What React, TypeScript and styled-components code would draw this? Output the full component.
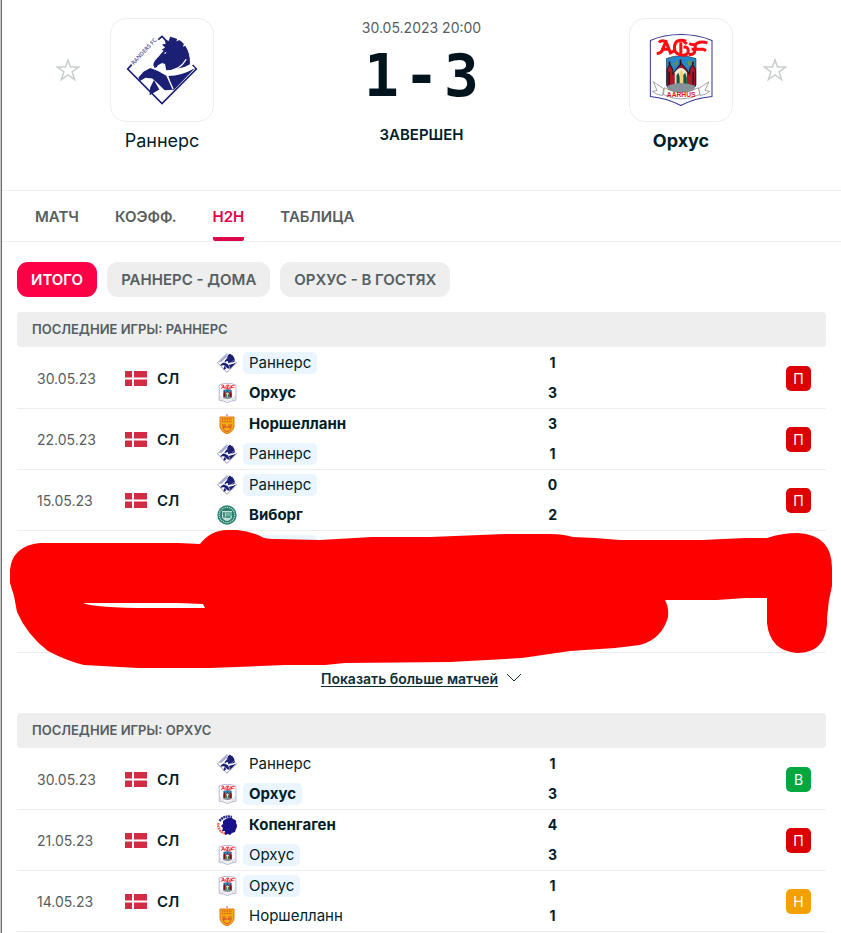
import React from "react";
import styled, { createGlobalStyle, css } from "styled-components";

const GlobalStyle = createGlobalStyle`
  * { box-sizing: border-box; }
  body {
    margin: 0;
    padding-left: 1px;
    background: #c8c8c8;
    color: #001e28;
    font-family: Inter, "Noto Sans", sans-serif;
    font-size: 14px;
  }
  button { font: inherit; border: 0; padding: 0; background: none; cursor: pointer; }
`;

const Page = styled.main`
  min-height: 100vh;
  background: #fff;
  border-left: 1px solid #6a6a6a;
`;

const Header = styled.header`
  display: grid;
  grid-template-columns: 24px 164px 1fr 164px 24px;
  padding: 18px 54px 34px;
  border-bottom: 1px solid #eee;
`;

const StarButton = styled.button`
  height: 24px;
  margin-top: 40px;
  color: #c8cdcd;
`;

const Team = styled.div`
  display: flex;
  flex-direction: column;
  align-items: center;
  gap: 4px;
`;

const LogoBox = styled.div`
  display: flex;
  align-items: center;
  justify-content: center;
  width: 104px;
  height: 104px;
  border: 1px solid #eee;
  border-radius: 16px;
`;

const TeamTitle = styled.a<{ $bold?: boolean }>`
  font-size: 18px;
  line-height: 30px;
  font-weight: ${(p) => (p.$bold ? 700 : 400)};
  color: #001e28;
  text-decoration: none;
`;

const Summary = styled.div`
  display: flex;
  flex-direction: column;
  align-items: center;
`;

const StartTime = styled.time`
  line-height: 20px;
  color: #555e61;
`;

const Score = styled.div`
  display: flex;
  gap: 5px;
  margin: 4px 0 12px;
  font: 700 58px/68px "DejaVu Sans Mono", monospace;
  color: #00141e;
`;

const Status = styled.div`
  font-size: 15px;
  line-height: 26px;
  font-weight: 600;
`;

const Tabs = styled.nav`
  display: flex;
  gap: 36px;
  height: 51px;
  padding: 0 33px;
  border-bottom: 1px solid #eee;
`;

const Tab = styled.a<{ $active?: boolean }>`
  display: flex;
  align-items: center;
  border-top: 4px solid transparent;
  border-bottom: 4px solid ${(p) => (p.$active ? "#dc0a4b" : "transparent")};
  border-radius: 2px;
  color: ${(p) => (p.$active ? "#e6004b" : "#555e61")};
  font-size: 15px;
  font-weight: 600;
  text-decoration: none;
`;

const Content = styled.div`
  padding: 20px 15px 0;
`;

const Chips = styled.div`
  display: flex;
  gap: 10px;
  margin-bottom: 15px;
`;

const Chip = styled.button<{ $active?: boolean }>`
  && { padding: 0 14px; font-size: 15px; font-weight: 600; }
  height: 35px;
  border-radius: 11px;
  color: ${(p) => (p.$active ? "#fff" : "#555e61")};
  background: ${(p) => (p.$active ? "#ff0046" : "#eee")};
`;

const Section = styled.section``;

const SectionTitle = styled.h2`
  margin: 0 0 1px;
  padding: 0 15px;
  font-size: 13px;
  line-height: 35px;
  font-weight: 600;
  color: #555e61;
  background: #eee;
  border-radius: 4px;
`;

const TableArea = styled.div`
  position: relative;
`;

const Matches = styled.table`
  width: 100%;
  table-layout: fixed;
  border-spacing: 0;
`;

const Cell = styled.td<{ $dim?: boolean }>`
  height: 61px;
  padding: 0;
  border-bottom: 1px solid #eee;
  ${(p) => p.$dim && css`padding-left: 20px; color: #555e61;`}
`;

const League = styled.div`
  display: flex;
  align-items: center;
  gap: 10px;
  font-size: 15px;
  font-weight: 600;
`;

const TeamLine = styled.div`
  display: flex;
  align-items: center;
  gap: 6px;
  height: 30px;
`;

const Emblem = styled.span`
  display: flex;
  justify-content: center;
  width: 20px;
`;

const TeamName = styled.span<{ $bold?: boolean; $marked?: boolean }>`
  height: 22px;
  padding: 0 6px;
  font-size: 15px;
  line-height: 22px;
  border-radius: 5px;
  font-weight: ${(p) => (p.$bold ? 700 : 400)};
  ${(p) => p.$marked && css`background: #ebf5ff;`}
`;

const BlankName = styled.div`
  width: 74px;
  height: 22px;
  margin: -26px 0 0 26px;
  border-radius: 5px;
  background: #ebf5ff;
`;

const Goals = styled.div`
  width: 24px;
  line-height: 30px;
  text-align: center;
  font-weight: 700;
`;

const resultColors: Record<string, string> = { "П": "#dc0000", "В": "#00a83f", "Н": "#f3a000" };

const Result = styled.button<{ $kind: string }>`
  display: block;
  width: 25px;
  height: 25px;
  && { margin: 0 15px 0 auto; line-height: 25px; }
  border-radius: 5px;
  color: #fff;
  background: ${(p) => resultColors[p.$kind]};
`;

const MoreLink = styled.a`
  display: flex;
  align-items: center;
  justify-content: center;
  gap: 8px;
  height: 50px;
  margin-bottom: 10px;
  font-size: 14px;
  font-weight: 600;
  color: #0f2d37;
  text-underline-offset: 2px;
`;

const MarkerStroke = styled.svg`
  position: absolute;
  left: -7px;
  bottom: -16px;
  width: calc(100% + 14px);
  height: 139px;
  pointer-events: none;
`;

function Star() {
  return (
    <svg width="24" height="24" viewBox="0 0 24 24" fill="none" stroke="currentColor" strokeWidth="1.5">
      <path d="M12 2l2.5 7.1h8.1l-6.5 4.8 2.5 7.7-6.6-4.7-6.6 4.7 2.5-7.7-6.5-4.8h8.1z" />
    </svg>
  );
}

function Randers({ size = 20 }: { size?: number }) {
  return (
    <svg width={size} height={size} viewBox="20 32 214 210" overflow="visible">
      <path d="M116 47L127 37L138 48M37 121L25 134L127 237L229 134L218 122" fill="none" stroke="#1c2074" strokeWidth="5" />
      {size < 30 && <path d="M30 124L116 42L130 68L66 127z" fill="#a9abd2" />}
      <g fill="#1c2074">
        <path d="M134 45l13 6 4-13q12 2 21 7l-2 7 8-4q8 5 14 12l-3 8 7-3q16 24 14 55l-16 8-54 12-4-21-9-3-12 7-4 6-6 2-4-9q2-13 17-26l14-17-6-2 10-7-9-9 11-2z" />
        <path d="M146 155q40-1 72-20l5-2-60 63-4 1z" />
        <path d="M57 159l15-17 20-11 23 9 25 14 11 17 10 25-26 1-22-21-15-14-20-2-17 10z" />
        <path d="M103 167l16 28-29 17 2-23z" />
      </g>
      <path d="M199 105q-19 34-60 35" fill="none" stroke="#fff" strokeWidth="4" />
      <path d="M140 147q45 5 74-24l10 7q-32 20-80 22z" fill="#fff" />
      <path d="M142 154l18 40" fill="none" stroke="#fff" strokeWidth="4" />
      <path d="M132 87l8-4-2 6z" fill="#fff" />
      {size > 30 && (
        <text transform="translate(43 123) rotate(-47)" fontFamily="Open Sans, sans-serif" fontSize="17" fontWeight="600" fill="#4a4d91">
          RANDERS FC
        </text>
      )}
    </svg>
  );
}

function Aarhus({ size = 20 }: { size?: number }) {
  const large = size > 30;
  return (
    <svg width={large ? 64 : 19} height={size} viewBox="27 25 191 220">
      <path d="M31 47Q71 29 122 29T215 47V214Q163 219 122 241Q80 219 31 214z" fill="#fff" stroke={large ? "#353598" : "#aaa5ce"} strokeWidth={large ? 3 : 9} />
      <path d="M79 101Q121 84 167 101V178Q160 203 123 206Q84 202 79 178z" fill="#2587c8" stroke="#202a46" strokeWidth="2" />
      <path d="M81 183v-49l8-17 9 17v13l10-13 15-19 16 19 9 13v-13l9-17 9 17v49z" fill="#ad1728" stroke="#2b1621" strokeWidth="3" />
      <path d="M121 104v18M88 118v-8M158 118v-8M87 140v38M159 140v38" stroke="#35131b" strokeWidth="5" />
      <path d="M104 180v-38q18-26 36 0v38z" fill="#e6edda" />
      <path d="M109 180v-29l6-8 4 14v23zm20 0v-30l6-7 5 16v21z" fill="#18553f" />
      <path d="M119 179v-37l5-8 5 10v35z" fill="#f0d579" />
      <path d="M82 182q38-17 83 0l-4 14q-39 15-77 0z" fill="#85929a" />
      <path d="M99 115q9 5 9-6 9 13-9 12m45-13l2 12 8-10-10 2 11 8" fill="none" stroke="#758f49" strokeWidth="3" />
      <g fill="none" stroke="#ff0b12" strokeWidth="9">
        <path d="M50 86q16-1 20-18l7-18q-15-6-20 3M77 49l14 35 11-6M63 73h22" />
        <path d="M138 49q-32-10-35 16-2 24 27 26 15-1 14-14 0-12-14-10M122 52v36M130 49l10 8" />
        <path d="M147 56q14 8 24-1 12-6 30-1M166 58l-3 24q-5 9-17 6M154 73h35l8 4" />
      </g>
      <path d="M40 170l31 21-4 20q-17-1-30-12l14-3zM206 170l-31 21 4 20q17-1 29-12l-14-3z" fill="#fff" stroke="#777" strokeWidth="2" />
      <path d="M73 188q50 28 101 0l5 20q-57 27-109 0z" fill="#fff" stroke="#777" strokeWidth="2" />
      {large && (
        <text x="123" y="215" textAnchor="middle" fontFamily="Liberation Sans, sans-serif" fontSize="20" fontWeight="700" fill="#dc171f">
          AARHUS
        </text>
      )}
    </svg>
  );
}

function Nordsjaelland() {
  return (
    <svg width="20" height="20" viewBox="0 0 20 20">
      <circle cx="10" cy="1" r="1" fill="#e98a83" />
      <path d="M3 3h14v9q0 5-7 8-7-3-7-8z" fill="#f3ad12" stroke="#df7419" />
      <path d="M5 5h10M5 7.5h10" stroke="#d2571d" strokeWidth="1.3" strokeDasharray="1 .7" />
      <path d="M6 10v4q1 3 4 4 3-1 4-4v-4M8 10v4M12 10v4M6 13h8" fill="none" stroke="#d8512a" strokeWidth="1" />
    </svg>
  );
}

function Viborg() {
  return (
    <svg width="20" height="20" viewBox="0 0 20 20">
      <circle cx="10" cy="10" r="9.7" fill="#28816c" />
      <circle cx="10" cy="10" r="7.7" fill="none" stroke="#b7dbd1" strokeWidth="1.2" strokeDasharray="1.2 .7" />
      <path d="M5 6h10v6q-1 3-5 4-4-1-5-4z" fill="#c5e3dc" />
      <path d="M6 7l1 5 1-5m4 0v6m-2-6v6m4-6v4M6 12h8" fill="none" stroke="#28816c" strokeWidth="1.1" />
    </svg>
  );
}

function Copenhagen() {
  return (
    <svg width="20" height="20" viewBox="0 0 20 20">
      <path d="M1.5 8A8.5 8.5 0 0 0 9 18.5" fill="none" stroke="#f06555" strokeWidth="2.5" strokeDasharray="1.8 .6" />
      <path d="M2.5 6Q7 0 15 2" fill="none" stroke="#302b91" strokeWidth="2.4" strokeDasharray="2 .5" />
      <path d="M6 6q4-4 9-3l1 1q4 1 3 4 2 3 0 6l-1 3-3 1-2 2-2-1-3 1v-4H5l1-3-2-2 2-2z" fill="#18118b" />
    </svg>
  );
}

function DanishFlag() {
  return (
    <svg width="22" height="15" viewBox="0 0 22 15">
      <path d="M0 0h22v15H0z" fill="#d12c43" />
      <path d="M7 0h2v15H7zM0 6.5h22v2H0z" fill="#fff" />
    </svg>
  );
}

const emblems: Record<string, () => React.ReactElement> = {
  "Раннерс": () => <Randers />,
  "Орхус": () => <Aarhus />,
  "Норшелланн": () => <Nordsjaelland />,
  "Виборг": () => <Viborg />,
  "Копенгаген": () => <Copenhagen />,
};

type Match = { date: string; teams: [string, string]; goals: [number, number]; result: string };

const randersMatches: Match[] = [
  { date: "30.05.23", teams: ["Раннерс", "Орхус"], goals: [1, 3], result: "П" },
  { date: "22.05.23", teams: ["Норшелланн", "Раннерс"], goals: [3, 1], result: "П" },
  { date: "15.05.23", teams: ["Раннерс", "Виборг"], goals: [0, 2], result: "П" },
];

const aarhusMatches: Match[] = [
  { date: "30.05.23", teams: ["Раннерс", "Орхус"], goals: [1, 3], result: "В" },
  { date: "21.05.23", teams: ["Копенгаген", "Орхус"], goals: [4, 3], result: "П" },
  { date: "14.05.23", teams: ["Орхус", "Норшелланн"], goals: [1, 1], result: "Н" },
];

function MatchTable({ matches, team, children }: { matches: Match[]; team: string; children?: React.ReactNode }) {
  return (
    <Matches aria-label={team}>
      <colgroup>
        <col width="108" />
        <col width="92" />
        <col width="40%" />
        <col />
        <col width="60" />
      </colgroup>
      <tbody>
        {matches.map((m) => (
          <tr key={m.date}>
            <Cell $dim>{m.date}</Cell>
            <Cell>
              <League><DanishFlag />СЛ</League>
            </Cell>
            <Cell>
              {m.teams.map((name, i) => (
                <TeamLine key={name}>
                  <Emblem>{emblems[name]()}</Emblem>
                  <TeamName $marked={name === team} $bold={m.goals[i] > m.goals[1 - i]}>{name}</TeamName>
                </TeamLine>
              ))}
            </Cell>
            <Cell>
              {m.goals.map((g, i) => <Goals key={i}>{g}</Goals>)}
            </Cell>
            <Cell><Result $kind={m.result}>{m.result}</Result></Cell>
          </tr>
        ))}
        {children}
      </tbody>
    </Matches>
  );
}

export default function App() {
  return (
    <>
      <GlobalStyle />
      <Page>
        <Header>
          <StarButton aria-label="Раннерс"><Star /></StarButton>
          <Team>
            <LogoBox><Randers size={72} /></LogoBox>
            <TeamTitle href="#randers">Раннерс</TeamTitle>
          </Team>
          <Summary>
            <StartTime>30.05.2023 20:00</StartTime>
            <Score><span>1</span><span>-</span><span>3</span></Score>
            <Status>ЗАВЕРШЕН</Status>
          </Summary>
          <Team>
            <LogoBox><Aarhus size={74} /></LogoBox>
            <TeamTitle href="#aarhus" $bold>Орхус</TeamTitle>
          </Team>
          <StarButton aria-label="Орхус"><Star /></StarButton>
        </Header>
        <Tabs>
          <Tab href="#match">МАТЧ</Tab>
          <Tab href="#odds">КОЭФФ.</Tab>
          <Tab href="#h2h" $active>H2H</Tab>
          <Tab href="#table">ТАБЛИЦА</Tab>
        </Tabs>
        <Content>
          <Chips>
            <Chip $active>ИТОГО</Chip>
            <Chip>РАННЕРС - ДОМА</Chip>
            <Chip>ОРХУС - В ГОСТЯХ</Chip>
          </Chips>
          <Section>
            <SectionTitle>ПОСЛЕДНИЕ ИГРЫ: РАННЕРС</SectionTitle>
            <TableArea>
              <MatchTable matches={randersMatches} team="Раннерс">
                <tr>
                  <Cell colSpan={2} />
                  <Cell><BlankName /></Cell>
                  <Cell colSpan={2} />
                </tr>
                <tr><Cell colSpan={5} /></tr>
              </MatchTable>
              <MarkerStroke viewBox="0 0 823 139" preserveAspectRatio="none" aria-hidden="true">
                <path
                  fill="#f00"
                  fillRule="evenodd"
                  d="M30 13H168L190 14Q201 0 217 0H227Q240 1 252 7Q256 9 266 9L310 10L362 7L420 7L495 4H540Q553 4 563 7L585 8L610 10H692L735 8H757Q772 3 788 3Q822 5 822 38V56L819 70L817 88V94Q815 123 787 123Q760 121 757 93V68H735L707 70H655Q659 77 658 87Q652 109 630 115L605 118L560 121L512 128L440 132L335 133L315 135H275L200 138H128L74 135Q57 131 38 121Q17 105 7 82L4 66L0 53V40Q2 16 30 13zM73 73H168L193 74L195 78H140Q85 78 73 73z"
                />
              </MarkerStroke>
            </TableArea>
            <MoreLink href="#more">
              Показать больше матчей
              <svg width="16" height="10" viewBox="0 0 16 10" fill="none" stroke="currentColor">
                <path d="M1 1l7 7 7-7" />
              </svg>
            </MoreLink>
          </Section>
          <Section>
            <SectionTitle>ПОСЛЕДНИЕ ИГРЫ: ОРХУС</SectionTitle>
            <MatchTable matches={aarhusMatches} team="Орхус" />
          </Section>
        </Content>
      </Page>
    </>
  );
}
